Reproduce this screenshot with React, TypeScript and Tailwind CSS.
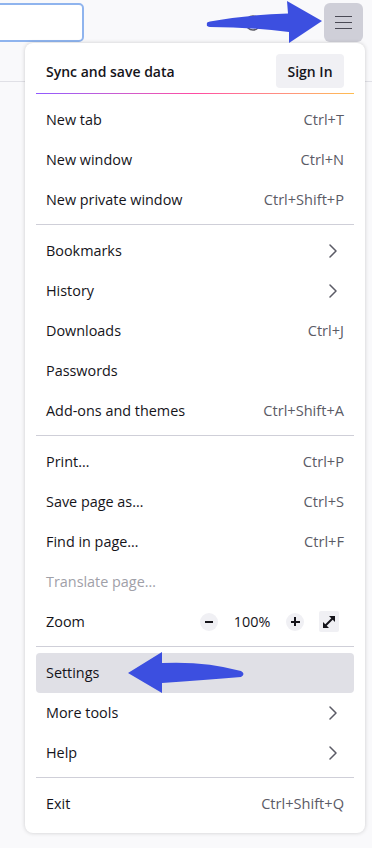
import React from 'react';

const font = { fontFamily: '"Open Sans", "Noto Sans", sans-serif' };

const Chevron = () => (
  <svg width="10" height="14" viewBox="0 0 10 14" className="mr-[6px]">
    <path d="M2 1 L8 7 L2 13" fill="none" stroke="#5b5b66" strokeWidth="1.5" strokeLinecap="round" strokeLinejoin="round" />
  </svg>
);

const Row = ({ label, shortcut, sub, disabled, active }: { label: string; shortcut?: string; sub?: boolean; disabled?: boolean; active?: boolean }) => (
  <div className={`flex h-[40px] items-center justify-between rounded-[4px] px-[10px] ${active ? 'bg-[#e0e0e6]' : ''}`}>
    <span className={`text-[14.4px] ${disabled ? 'text-[#a0a0a8]' : 'text-[#15141a]'}`}>{label}</span>
    {shortcut && <span className="text-[14.6px] text-[#5b5b66]">{shortcut}</span>}
    {sub && <Chevron />}
  </div>
);

const Sep = () => <div className="mb-[6px] mt-[4px] h-px bg-[#cfcfd8]" />;

const App = () => {
  return (
    <div className="relative h-[848px] w-[372px] overflow-hidden bg-[#f9f9fb]" style={font}>
      {/* toolbar */}
      <div className="flex h-[82px] items-start justify-between border-b border-[#e0e0e6]">
        <div className="ml-[-12px] mt-[3px] h-[39px] w-[96px] rounded-[5px] border-2 border-[#8fb4ee] bg-white" />
        <div className="mr-[9px] mt-[3px] flex h-[39px] w-[39px] flex-col items-center justify-center gap-[4.5px] rounded-[6px] bg-[#cfcfd8]">
          <div className="h-[1.5px] w-[17px] bg-[#4a4a55]" />
          <div className="h-[1.5px] w-[17px] bg-[#4a4a55]" />
          <div className="h-[1.5px] w-[17px] bg-[#4a4a55]" />
        </div>
      </div>

      {/* app menu */}
      <div className="absolute left-[25px] top-[43px] w-[340px] rounded-[8px] bg-white px-[11px] pb-[9px] pt-[8px] shadow-[0_0_4px_rgba(0,0,0,0.18)]">
        <div className="flex h-[40px] items-center justify-between pl-[10px]">
          <span className="text-[14px] font-semibold text-[#15141a]">Sync and save data</span>
          <button className="mr-[10px] h-[34px] w-[68px] rounded-[4px] bg-[#f0f0f4] text-[14px] font-semibold text-[#15141a]">Sign In</button>
        </div>
        <div className="mb-[6px] mt-[2px] h-px bg-gradient-to-r from-[#9059ff] via-[#ff4aa2] to-[#ffbd4f]" />

        <Row label="New tab" shortcut="Ctrl+T" />
        <Row label="New window" shortcut="Ctrl+N" />
        <Row label="New private window" shortcut="Ctrl+Shift+P" />
        <Sep />
        <Row label="Bookmarks" sub />
        <Row label="History" sub />
        <Row label="Downloads" shortcut="Ctrl+J" />
        <Row label="Passwords" />
        <Row label="Add-ons and themes" shortcut="Ctrl+Shift+A" />
        <Sep />
        <Row label="Print…" shortcut="Ctrl+P" />
        <Row label="Save page as…" shortcut="Ctrl+S" />
        <Row label="Find in page…" shortcut="Ctrl+F" />
        <Row label="Translate page…" disabled />
        <div className="flex h-[40px] items-center justify-between px-[10px]">
          <span className="text-[14.4px] text-[#15141a]">Zoom</span>
          <div className="mr-[5px] flex items-center">
            <div className="flex h-[18px] w-[18px] items-center justify-center rounded-full bg-[#f0f0f4]">
              <div className="h-[2px] w-[8px] bg-[#15141a]" />
            </div>
            <span className="w-[68px] text-center text-[14.4px] text-[#15141a]">100%</span>
            <div className="relative flex h-[18px] w-[18px] items-center justify-center rounded-full bg-[#f0f0f4]">
              <div className="h-[2px] w-[9px] bg-[#15141a]" />
              <div className="absolute h-[9px] w-[2px] bg-[#15141a]" />
            </div>
            <div className="ml-[15px] flex h-[21px] w-[20px] items-center justify-center rounded-[2px] bg-[#f0f0f4]">
              <svg width="14" height="14" viewBox="0 0 14 14">
                <path d="M2.5 11.5 L11.5 2.5" stroke="#15141a" strokeWidth="2" />
                <path d="M1 13 L1 7 L7 13 Z" fill="#15141a" />
                <path d="M13 1 L13 7 L7 1 Z" fill="#15141a" />
              </svg>
            </div>
          </div>
        </div>
        <Sep />
        <Row label="Settings" active />
        <Row label="More tools" sub />
        <Row label="Help" sub />
        <Sep />
        <Row label="Exit" shortcut="Ctrl+Shift+Q" />
      </div>

      {/* annotation arrows */}
      <svg className="pointer-events-none absolute left-0 top-0" width="372" height="848" viewBox="0 0 372 848">
        <circle cx="253" cy="23" r="7" fill="none" stroke="#5b5b66" strokeWidth="1.5" />
        <path d="M207 24 Q206 22 210 21.5 Q245 15 288 13.5 L287 1 L322 21 L289 43 L289 32 Q250 27 210 27 Q206 26.5 207 24 Z" fill="#3c4fe0" />
        <path d="M128 673 L162 652 L162 663 Q205 661 241 671 Q246 674 241 677 Q205 680 162 683 L162 693 Z" fill="#3c4fe0" />
      </svg>
    </div>
  );
};

export default App;
